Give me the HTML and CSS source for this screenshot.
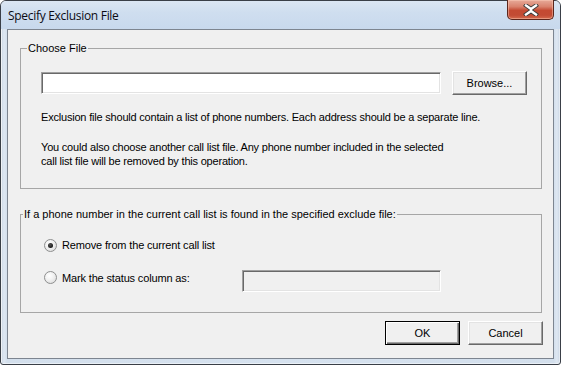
FILE: index.html
```html
<!DOCTYPE html>
<html>
<head>
<meta charset="utf-8">
<link rel="stylesheet" href="styles.css">
</head>
<body>
<div class="window">
  <div class="titlebar">
    <span class="title">Specify Exclusion File</span>
    <button class="close" aria-label="Close">
      <svg width="18" height="12" viewBox="0 0 18 12">
        <path d="M4 1.5 L9 5 L14 1.5 M4 10.5 L9 7 L14 10.5 M9 5 L9 7" fill="none" stroke="#3b3b3b" stroke-width="4.2" stroke-linecap="square"/>
        <path d="M4 1.5 L9 5 L14 1.5 M4 10.5 L9 7 L14 10.5 M9 5 L9 7" fill="none" stroke="#ffffff" stroke-width="2.4" stroke-linecap="square"/>
      </svg>
    </button>
  </div>
  <div class="client">
    <fieldset class="group group-file">
      <legend>Choose File</legend>
      <div class="file-row">
        <div class="field field-file"></div>
        <button class="btn btn-browse">Browse...</button>
      </div>
      <p class="note note-1">Exclusion file should contain a list of phone numbers. Each address should be a separate line.</p>
      <p class="note note-2">You could also choose another call list file. Any phone number included in the selected<br>call list file will be removed by this operation.</p>
    </fieldset>
    <fieldset class="group group-action">
      <legend>If a phone number in the current call list is found in the specified exclude file:</legend>
      <div class="radio-row row-1">
        <span class="radio checked"></span>
        <span class="radio-label">Remove from the current call list</span>
      </div>
      <div class="radio-row row-2">
        <span class="radio"></span>
        <span class="radio-label wide">Mark the status column as:</span>
        <div class="field field-status"></div>
      </div>
    </fieldset>
    <div class="actions">
      <button class="btn btn-default">OK</button>
      <button class="btn">Cancel</button>
    </div>
  </div>
</div>
</body>
</html>
```

FILE: styles.css
```css
* { box-sizing: border-box; }
html, body {
  margin: 0;
  padding: 0;
  width: 561px;
  height: 365px;
  overflow: hidden;
  background: #ffffff;
}
.window {
  width: 561px;
  height: 365px;
  border: 1px solid #3a3f47;
  border-radius: 6px 6px 3px 3px;
  background: linear-gradient(90deg, #c6d3e2 0px, #dfe8f2 3px, #d3dfec 6px, #d6e2ef 50%, #d3dfec calc(100% - 6px), #dfe8f2 calc(100% - 3px), #c6d3e2 100%);
  box-shadow: inset 1px 1px 0 rgba(255,255,255,0.7), inset -1px -1px 0 rgba(255,255,255,0.5);
  display: flex;
  flex-direction: column;
  font-family: "Liberation Sans", Arial, sans-serif;
  font-size: 11px;
  color: #000;
}
.titlebar {
  height: 28px;
  flex: none;
  display: flex;
  align-items: flex-start;
  padding-left: 7px;
  background: linear-gradient(180deg, #dbe6f3 0%, #cfdeef 40%, #c8d9ed 100%);
  border-radius: 5px 5px 0 0;
}
.title {
  font-family: "Open Sans", "Noto Sans", sans-serif;
  font-size: 12px;
  letter-spacing: -0.3px;
  line-height: 16px;
  margin-top: 7px;
  color: #0b0b14;
}
.close {
  margin-left: auto;
  margin-right: 6px;
  margin-top: -1px;
  width: 47px;
  height: 20px;
  padding: 0;
  border: 1px solid #5b261c;
  border-top: none;
  border-radius: 0 0 5px 5px;
  background: linear-gradient(180deg, #e7aa99 0%, #d9826d 35%, #c44a32 55%, #c24b34 80%, #d46a4e 100%);
  box-shadow: inset 0 0 0 1px rgba(255,210,190,0.45);
  display: flex;
  align-items: center;
  justify-content: center;
}
.close svg { display: block; }
.client {
  flex: 1;
  margin: 0 6px 5px 6px;
  border: 1px solid #7d8590;
  background: #f0f0f0;
  display: flex;
  flex-direction: column;
}
.group {
  margin: 0 11px 0 12px;
  border: 1px solid #a6a6a6;
  min-width: 0;
}
.group legend {
  padding: 0 1px;
  line-height: 14px;
  font-size: 11px;
}
.group-file {
  margin-top: 11px;
  padding: 16px 0 20px 20px;
}
.group-file legend { margin-left: -14px; }
.group-action {
  margin-top: 18px;
  padding: 17px 0 20px 23px;
}
.group-action legend { margin-left: -21px; }
.file-row {
  display: flex;
  align-items: center;
  height: 24px;
}
.field {
  height: 22px;
  background: #ffffff;
  border-top: 1px solid #a0a0a0;
  border-left: 1px solid #a0a0a0;
  border-bottom: 1px solid #ffffff;
  border-right: 1px solid #ffffff;
  box-shadow: inset 1px 1px 0 #696969, inset -1px -1px 0 #e3e3e3;
}
.field-file { width: 400px; }
.field-status { width: 199px; background: #f0f0f0; }
.btn {
  font-family: "Liberation Sans", Arial, sans-serif;
  font-size: 11px;
  color: #000;
  width: 75px;
  height: 24px;
  padding: 0;
  background: #f0f0f0;
  border-top: 1px solid #ffffff;
  border-left: 1px solid #ffffff;
  border-right: 1px solid #696969;
  border-bottom: 1px solid #696969;
  box-shadow: inset -1px -1px 0 #a0a0a0, inset 1px 1px 0 #e3e3e3;
  border-radius: 0;
}
.btn-browse { margin-left: 11px; }
.btn-default {
  border: 1px solid #000000;
  box-shadow: inset 1px 1px 0 #ffffff, inset -1px -1px 0 #696969, inset -2px -2px 0 #a0a0a0;
}
.note {
  margin: 0;
  line-height: 14px;
  letter-spacing: -0.2px;
}
.note-1 { margin-top: 15px; }
.note-2 { margin-top: 16px; }
.radio-row {
  display: flex;
  align-items: center;
}
.row-1 { height: 14px; }
.row-2 {
  height: 22px;
  margin-top: 18px;
  align-items: flex-start;
}
.row-2 .radio { margin-top: 1px; }
.row-2 .radio-label { margin-top: 1px; }
.radio {
  width: 13px;
  height: 13px;
  border-radius: 50%;
  border: 1px solid #8e8f8f;
  background: radial-gradient(circle at 40% 35%, #ffffff 0%, #f2f2f2 40%, #d6d6d6 100%);
  flex: none;
  display: flex;
  align-items: center;
  justify-content: center;
}
.radio.checked::after {
  content: "";
  width: 5px;
  height: 5px;
  border-radius: 50%;
  background: radial-gradient(circle at 40% 35%, #555 0%, #111 80%);
}
.radio-label {
  margin-left: 5px;
  line-height: 14px;
  letter-spacing: -0.15px;
}
.radio-label.wide { width: 180px; flex: none; }
.actions {
  display: flex;
  justify-content: flex-end;
  gap: 8px;
  margin: 8px 10px 0 0;
}
```
